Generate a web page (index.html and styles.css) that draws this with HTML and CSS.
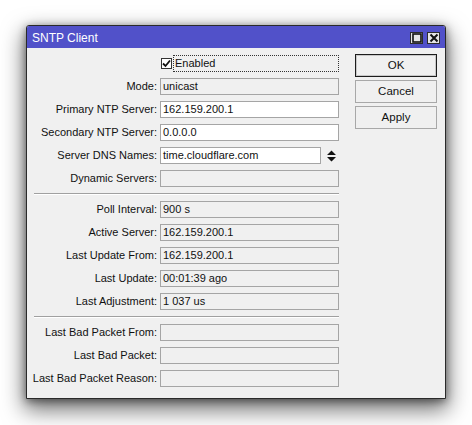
FILE: index.html
```html
<!DOCTYPE html>
<html>
<head>
<meta charset="utf-8">
<link rel="stylesheet" href="styles.css">
</head>
<body>
<div class="desktop">
<div class="window">
  <div class="titlebar">
    <span class="title">SNTP Client</span>
    <div class="tbtns">
      <span class="tbtn"><svg width="10" height="10" viewBox="0 0 10 10"><rect x="1" y="1" width="8" height="8" fill="none" stroke="#111" stroke-width="1.6"/></svg></span>
      <span class="tbtn"><svg width="10" height="10" viewBox="0 0 10 10"><path d="M1.5 1.5 L8.5 8.5 M8.5 1.5 L1.5 8.5" stroke="#111" stroke-width="2"/></svg></span>
    </div>
  </div>
  <div class="content">
    <div class="form">
      <div></div>
      <div class="check-row">
        <span class="checkbox"><svg width="9" height="9" viewBox="0 0 9 9"><path d="M1 4.5 L3.5 7 L8 1.5" fill="none" stroke="#111" stroke-width="1.8"/></svg></span>
        <span class="focus">Enabled</span>
      </div>

      <div class="label">Mode:</div>
      <div class="field ro">unicast</div>

      <div class="label">Primary NTP Server:</div>
      <div class="field">162.159.200.1</div>

      <div class="label">Secondary NTP Server:</div>
      <div class="field">0.0.0.0</div>

      <div class="label">Server DNS Names:</div>
      <div class="dns">
        <div class="field grow">time.cloudflare.com</div>
        <svg class="updown" width="9" height="12" viewBox="0 0 9 12"><path d="M0 5 L4.5 0.5 L9 5 Z M0 7 L9 7 L4.5 11.5 Z" fill="#111"/></svg>
      </div>

      <div class="label">Dynamic Servers:</div>
      <div class="field ro"></div>

      <div class="sep"></div>

      <div class="label">Poll Interval:</div>
      <div class="field ro">900 s</div>

      <div class="label">Active Server:</div>
      <div class="field ro">162.159.200.1</div>

      <div class="label">Last Update From:</div>
      <div class="field ro">162.159.200.1</div>

      <div class="label">Last Update:</div>
      <div class="field ro">00:01:39 ago</div>

      <div class="label">Last Adjustment:</div>
      <div class="field ro">1 037 us</div>

      <div class="sep"></div>

      <div class="label">Last Bad Packet From:</div>
      <div class="field ro"></div>

      <div class="label">Last Bad Packet:</div>
      <div class="field ro"></div>

      <div class="label">Last Bad Packet Reason:</div>
      <div class="field ro"></div>
    </div>
    <div class="buttons">
      <div class="btn default">OK</div>
      <div class="btn">Cancel</div>
      <div class="btn">Apply</div>
    </div>
  </div>
</div>
</div>
</body>
</html>
```

FILE: styles.css
```css
html, body {
  margin: 0;
  padding: 0;
  background: #ffffff;
}
body {
  font-family: "Liberation Sans", Arial, sans-serif;
  font-size: 11px;
  color: #111;
}
.desktop {
  width: 472px;
  height: 425px;
  box-sizing: border-box;
  padding: 25px 0 0 26px;
  background: #ffffff;
}
.window {
  width: 420px;
  box-sizing: border-box;
  border: 1px solid #2a2a2a;
  border-radius: 3px 3px 0 0;
  background: #f0f0f0;
  box-shadow: 0 9px 22px 2px rgba(0,0,0,0.55), 0 2px 8px rgba(0,0,0,0.45);
}
.titlebar {
  height: 22px;
  background: #5151c9;
  display: flex;
  align-items: center;
  justify-content: space-between;
  padding: 0 5px 0 5px;
  border-radius: 2px 2px 0 0;
}
.title {
  color: #ffffff;
  font-size: 12px;
  padding-top: 1px;
}
.tbtns {
  display: flex;
  gap: 4px;
  padding-top: 1px;
}
.tbtn {
  width: 13px;
  height: 12px;
  box-sizing: border-box;
  border: 1px solid #2c2c2c;
  background: #e6e6e6;
  display: flex;
  align-items: center;
  justify-content: center;
}
.tbtn svg { display: block; }
.content {
  display: flex;
  align-items: flex-start;
  padding: 7px 8px 11px 0;
}
.form {
  display: grid;
  grid-template-columns: 130px 179px;
  grid-template-rows: repeat(6, 17px) 2px repeat(5, 17px) 2px repeat(3, 17px);
  column-gap: 3px;
  row-gap: 6px;
}
.form > .sep {
  grid-column: 1 / -1;
  height: 0;
  margin-left: 7px;
  border-top: 1px solid #a0a0a0;
  border-bottom: 1px solid #ffffff;
  align-self: center;
}
.label {
  text-align: right;
  white-space: nowrap;
  line-height: 17px;
}
.field {
  box-sizing: border-box;
  height: 17px;
  border: 1px solid #a5a5a5;
  background: #ffffff;
  line-height: 15px;
  padding-left: 2px;
  white-space: nowrap;
  overflow: hidden;
}
.field.ro {
  background: #f0f0f0;
}
.dns {
  display: flex;
  align-items: center;
}
.field.grow {
  width: 161px;
}
.updown {
  display: block;
  margin-left: 6px;
}
.check-row {
  display: flex;
  align-items: center;
}
.checkbox {
  width: 11px;
  height: 11px;
  box-sizing: border-box;
  border: 1px solid #333;
  background: #fff;
  margin-left: 1px;
  display: flex;
  align-items: center;
  justify-content: center;
}
.checkbox svg { display: block; }
.focus {
  flex: 1;
  height: 17px;
  box-sizing: border-box;
  border: 1px dotted #333;
  margin-left: 1px;
  padding-left: 1px;
  line-height: 15px;
}
.buttons {
  margin-left: 16px;
  margin-top: -1px;
  display: flex;
  flex-direction: column;
  gap: 3px;
}
.btn {
  width: 82px;
  height: 23px;
  box-sizing: border-box;
  border: 1px solid #a8a8a8;
  background: #f0f0f0;
  text-align: center;
  line-height: 21px;
  font-size: 11.5px;
}
.btn.default {
  border: 1px solid #1c1c1c;
  box-shadow: inset 0 0 0 1px #c8c8c8;
}
```
